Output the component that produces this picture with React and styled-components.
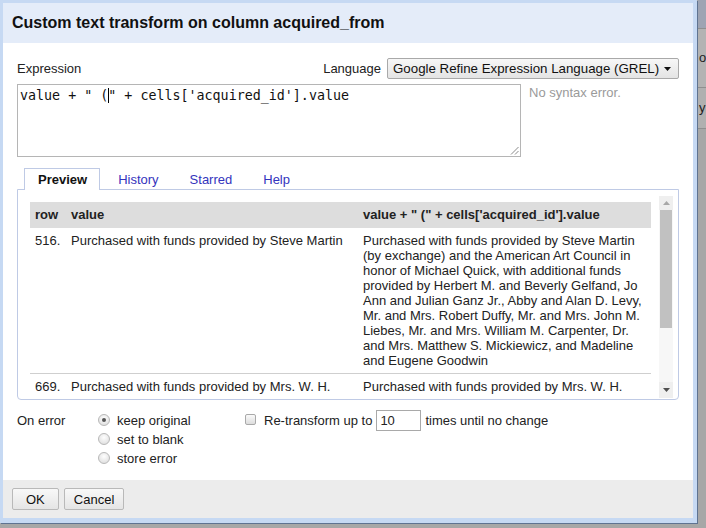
import styled, { createGlobalStyle } from "styled-components";

const GlobalStyle = createGlobalStyle`
  html, body {
    margin: 0;
    padding: 0;
    background: #a7a7a7;
    overflow: hidden;
  }
  body {
    font-family: "Liberation Sans", Arial, sans-serif;
    font-size: 13px;
    color: #222;
  }
`;

const Screen = styled.div`
  display: flex;
  align-items: flex-start;
  width: 706px;
  height: 528px;
  overflow: hidden;
  background: #a7a7a7;
`;

const Dialog = styled.div`
  box-sizing: border-box;
  flex: none;
  width: 697px;
  height: 523px;
  display: flex;
  flex-direction: column;
  background: #fff;
  border-style: solid;
  border-color: #c6d9f3;
  border-width: 3px 4px 5px 3px;
  box-shadow: 1px 1px 0 #5f7391;
`;

const Header = styled.div`
  height: 40px;
  flex: none;
  display: flex;
  align-items: center;
  padding-left: 9px;
  background: #e4ecf9;
`;

const Title = styled.h1`
  margin: 0;
  font-size: 16px;
  font-weight: bold;
  color: #111;
`;

const Body = styled.div`
  flex: 1;
  display: flex;
  flex-direction: column;
  padding: 15px 14px 0;
`;

const LangRow = styled.div`
  display: flex;
  align-items: center;
  justify-content: space-between;
  height: 21px;
`;

const Label = styled.span`
  white-space: nowrap;
`;

const LangPicker = styled.div`
  display: flex;
  align-items: center;
  gap: 6px;
`;

const Select = styled.div`
  box-sizing: border-box;
  width: 292px;
  height: 21px;
  display: flex;
  align-items: center;
  justify-content: space-between;
  padding: 0 7px 0 5px;
  border: 1px solid #a9a9a9;
  border-radius: 2px;
  background: linear-gradient(#f7f7f7, #e4e4e4);
  font-size: 13.3px;
  color: #111;
`;

const ExprRow = styled.div`
  display: flex;
  align-items: flex-start;
  gap: 8px;
  margin-top: 5px;
`;

const ExprBox = styled.div`
  position: relative;
  box-sizing: border-box;
  width: 504px;
  height: 73px;
  padding: 2px 2px;
  border: 1px solid #b5b5b5;
  font-family: "DejaVu Sans Mono", monospace;
  font-size: 13.33px;
  line-height: 17px;
  color: #111;
  white-space: pre;
`;

const Caret = styled.span`
  display: inline-block;
  width: 1px;
  height: 15px;
  margin-right: -1px;
  background: #000;
  vertical-align: -3px;
`;

const Grip = styled.svg`
  position: absolute;
  right: 1px;
  bottom: 1px;
`;

const Status = styled.span`
  margin-top: 1px;
  color: #9a9a9a;
`;

const TabStrip = styled.div`
  display: flex;
  gap: 4px;
  margin-top: 11px;
  padding-left: 7px;
  position: relative;
  z-index: 1;
`;

const Tab = styled.div`
  box-sizing: border-box;
  height: 22px;
  display: flex;
  align-items: center;
  padding: 0 12px 0 13px;
  margin-bottom: -1px;
  border: 1px solid ${(p) => (p.$active ? "#bfcae5" : "transparent")};
  border-bottom: none;
  background: ${(p) => (p.$active ? "#fff" : "transparent")};
  color: ${(p) => (p.$active ? "#111" : "#3434bd")};
  font-weight: ${(p) => (p.$active ? "bold" : "normal")};
`;

const Panel = styled.div`
  box-sizing: border-box;
  height: 211px;
  display: flex;
  gap: 8px;
  padding: 6px 4px 1px 12px;
  border: 1px solid #bfcae5;
  border-radius: 0 0 4px 4px;
`;

const PreviewTable = styled.div`
  width: 621px;
  margin-top: 6px;
  overflow: hidden;
`;

const Row = styled.div`
  display: grid;
  grid-template-columns: 36px 292px 293px;
  border-bottom: ${(p) => (p.$head ? "none" : "1px solid #cfcfcf")};
  background: ${(p) => (p.$head ? "#dddddd" : "transparent")};
  font-weight: ${(p) => (p.$head ? "bold" : "normal")};
`;

const Cell = styled.div`
  padding: ${(p) => (p.$head ? "0 3px 0 5px" : "5px 3px 5px 5px")};
  line-height: ${(p) => (p.$head ? "26px" : "15px")};
  white-space: ${(p) => (p.$head ? "nowrap" : "normal")};
`;

const ScrollBar = styled.div`
  width: 14px;
  display: flex;
  flex-direction: column;
  background: #f7f7f7;
`;

const ScrollButton = styled.div`
  height: ${(p) => p.$h}px;
  display: flex;
  align-items: center;
  justify-content: center;
  background: #efefef;
`;

const Thumb = styled.div`
  height: 118px;
  margin: 0 1px;
  background: #c1c1c1;
`;

const Track = styled.div`
  flex: 1;
`;

const Options = styled.div`
  display: flex;
  align-items: flex-start;
  margin-top: 10px;
`;

const ErrorLabel = styled.div`
  width: 81px;
  line-height: 19px;
  padding-top: 1px;
`;

const RadioGroup = styled.div`
  width: 147px;
  display: flex;
  flex-direction: column;
  padding-top: 1px;
`;

const RadioLine = styled.div`
  height: 19px;
  display: flex;
  align-items: center;
  gap: 7px;
`;

const Radio = styled.span`
  box-sizing: border-box;
  width: 12px;
  height: 12px;
  border-radius: 50%;
  border: 1px solid #b8b8b8;
  background: radial-gradient(circle at 50% 35%, #fefefe, #d9d9d9);
  display: flex;
  align-items: center;
  justify-content: center;
  margin-top: -2px;
  &::after {
    content: "";
    width: 4px;
    height: 4px;
    border-radius: 50%;
    background: ${(p) => (p.$checked ? "#555" : "transparent")};
  }
`;

const Retransform = styled.div`
  display: flex;
  align-items: center;
  height: 21px;
`;

const Checkbox = styled.span`
  box-sizing: border-box;
  width: 11px;
  height: 11px;
  margin-right: 8px;
  margin-top: -2px;
  border: 1px solid #a9a9a9;
  border-radius: 2px;
  background: linear-gradient(#fafafa, #dddddd);
`;

const TimesInput = styled.div`
  box-sizing: border-box;
  width: 45px;
  height: 21px;
  margin: 0 4px;
  padding-left: 3px;
  display: flex;
  align-items: center;
  border: 1px solid #a9a9a9;
`;

const Footer = styled.div`
  height: 38px;
  flex: none;
  display: flex;
  align-items: center;
  gap: 5px;
  padding-left: 9px;
  background: #ececec;
`;

const Button = styled.div`
  box-sizing: border-box;
  height: 22px;
  padding: 0 ${(p) => p.$pad}px;
  display: flex;
  align-items: center;
  border: 1px solid #b9b9b9;
  border-radius: 2px;
  background: linear-gradient(#f8f8f8, #e5e5e5);
  color: #111;
`;

const Backdrop = styled.div`
  flex: 1;
  height: 100%;
  margin-left: 1px;
  display: flex;
  flex-direction: column;
  background: #a7a7a7;
  overflow: hidden;
  font-size: 13px;
  color: #222;
`;

const BackdropBand = styled.div`
  height: ${(p) => p.$h}px;
  flex: none;
  background: ${(p) => p.$bg};
  border-bottom: 1px solid #8f8f8f;
  line-height: ${(p) => p.$h}px;
  padding-left: 1px;
`;

const longValue =
  "Purchased with funds provided by Steve Martin (by exchange) and the American Art Council in honor of Michael Quick, with additional funds provided by Herbert M. and Beverly Gelfand, Jo Ann and Julian Ganz Jr., Abby and Alan D. Levy, Mr. and Mrs. Robert Duffy, Mr. and Mrs. John M. Liebes, Mr. and Mrs. William M. Carpenter, Dr. and Mrs. Matthew S. Mickiewicz, and Madeline and Eugene Goodwin";

const rows = [
  { row: "516.", value: "Purchased with funds provided by Steve Martin", result: longValue },
  { row: "669.", value: "Purchased with funds provided by Mrs. W. H.", result: "Purchased with funds provided by Mrs. W. H." },
];

const tabs = ["Preview", "History", "Starred", "Help"];

const Triangle = ({ up, color }) => (
  <svg width="7" height="4" viewBox="0 0 7 4">
    <polygon points={up ? "0,4 7,4 3.5,0" : "0,0 7,0 3.5,4"} fill={color} />
  </svg>
);

export default function App() {
  return (
    <Screen>
      <GlobalStyle />
      <Dialog>
        <Header>
          <Title>Custom text transform on column acquired_from</Title>
        </Header>
        <Body>
          <LangRow>
            <Label>Expression</Label>
            <LangPicker>
              <Label>Language</Label>
              <Select>
                <span>Google Refine Expression Language (GREL)</span>
                <Triangle color="#111" />
              </Select>
            </LangPicker>
          </LangRow>
          <ExprRow>
            <ExprBox>
              value + " (<Caret />" + cells['acquired_id'].value
              <Grip width="9" height="9" viewBox="0 0 9 9">
                <line x1="8.5" y1="1" x2="1" y2="8.5" stroke="#8a8a8a" strokeWidth="1" />
                <line x1="8.5" y1="5" x2="5" y2="8.5" stroke="#8a8a8a" strokeWidth="1" />
              </Grip>
            </ExprBox>
            <Status>No syntax error.</Status>
          </ExprRow>
          <TabStrip>
            {tabs.map((t, i) => (
              <Tab key={t} $active={i === 0}>
                {t}
              </Tab>
            ))}
          </TabStrip>
          <Panel>
            <PreviewTable>
              <Row $head>
                <Cell $head>row</Cell>
                <Cell $head>value</Cell>
                <Cell $head>value + " (" + cells['acquired_id'].value</Cell>
              </Row>
              {rows.map((r) => (
                <Row key={r.row}>
                  <Cell>{r.row}</Cell>
                  <Cell>{r.value}</Cell>
                  <Cell>{r.result}</Cell>
                </Row>
              ))}
            </PreviewTable>
            <ScrollBar>
              <ScrollButton $h={14}>
                <Triangle up color="#a8a8a8" />
              </ScrollButton>
              <Thumb />
              <Track />
              <ScrollButton $h={16}>
                <Triangle color="#505050" />
              </ScrollButton>
            </ScrollBar>
          </Panel>
          <Options>
            <ErrorLabel>On error</ErrorLabel>
            <RadioGroup>
              <RadioLine>
                <Radio $checked />
                keep original
              </RadioLine>
              <RadioLine>
                <Radio />
                set to blank
              </RadioLine>
              <RadioLine>
                <Radio />
                store error
              </RadioLine>
            </RadioGroup>
            <Retransform>
              <Checkbox />
              Re-transform up to
              <TimesInput>10</TimesInput>
              times until no change
            </Retransform>
          </Options>
        </Body>
        <Footer>
          <Button $pad={13}>OK</Button>
          <Button $pad={9}>Cancel</Button>
        </Footer>
      </Dialog>
      <Backdrop>
        <BackdropBand $h={28} $bg="#9ea4b3" />
        <BackdropBand $h={58} $bg="#b3b3b3">o</BackdropBand>
        <BackdropBand $h={40} $bg="#b0b0b0">y</BackdropBand>
      </Backdrop>
    </Screen>
  );
}
